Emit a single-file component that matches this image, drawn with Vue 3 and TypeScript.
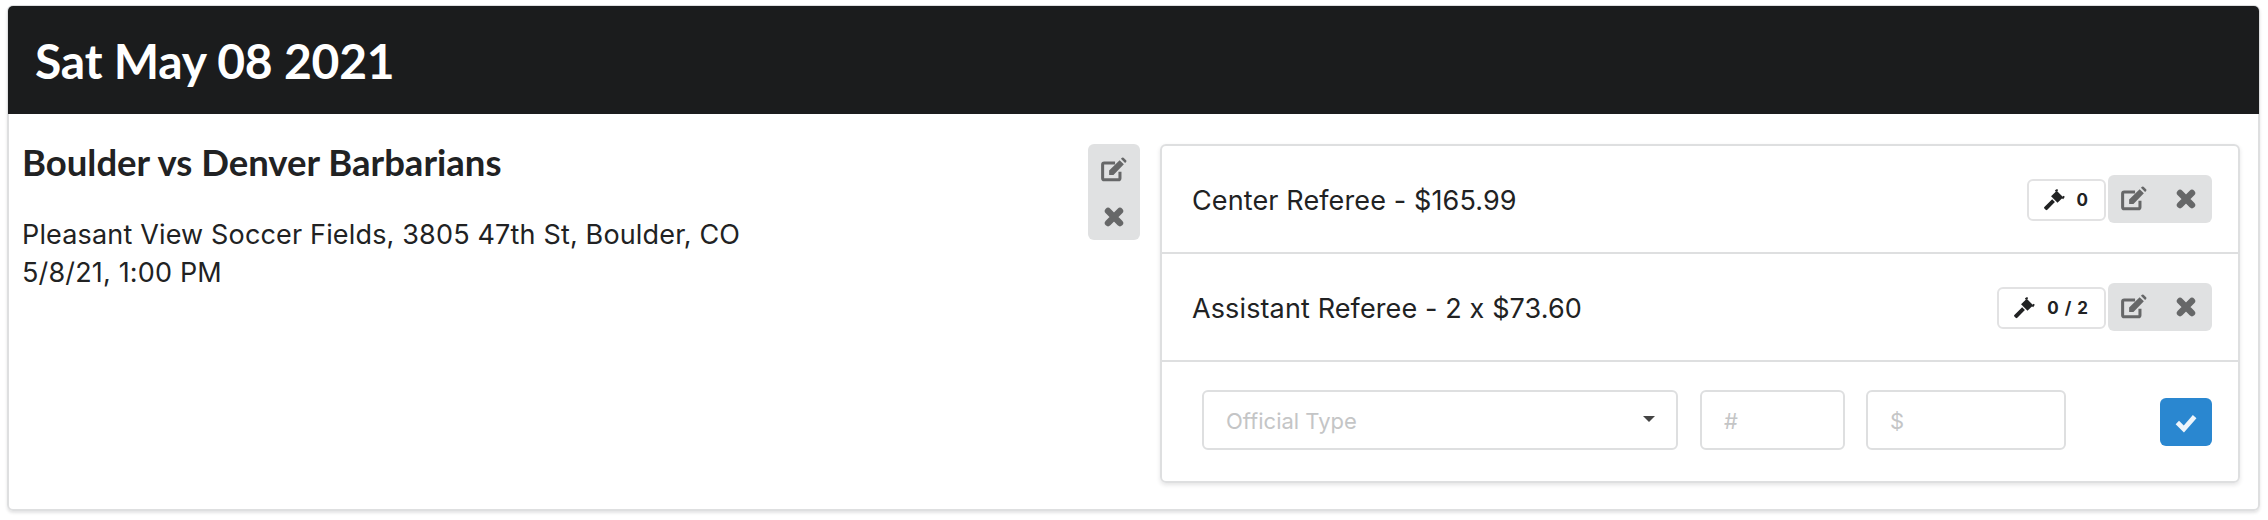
<script setup lang="ts">
type Official = {
  label: string
  count: string
}

const officials: Official[] = [
  { label: 'Center Referee - $165.99', count: '0' },
  { label: 'Assistant Referee - 2 x $73.60', count: '0 / 2' },
]
</script>

<template>
  <div class="page">
    <section class="day-card">
      <header class="day-header">Sat May 08 2021</header>
      <div class="day-body">
        <div class="game-info">
          <h3 class="game-title">Boulder vs Denver Barbarians</h3>
          <p class="game-meta">Pleasant View Soccer Fields, 3805 47th St, Boulder, CO<br />5/8/21, 1:00 PM</p>
        </div>

        <div class="btn-group vertical">
          <button class="icon-btn" type="button">
            <svg class="icon" viewBox="0 0 24 24"><path d="M17.500 13.500V19.500a1.500 1.500 0 0 1-1.500 1.500H3a1.500 1.500 0 0 1-1.500-1.500V7a1.500 1.500 0 0 1 1.500-1.500h10" fill="none" stroke="currentColor" stroke-width="2.800" /><path d="M7.500 12.400 17.200 2.900l3.900 3.900-9.600 9.700h-4zM18.400 1.700l1-1a1 1 0 0 1 1.400 0l2.400 2.400a1 1 0 0 1 0 1.400l-1 1z" fill="currentColor" /></svg>
          </button>
          <button class="icon-btn" type="button">
            <svg class="icon cross" viewBox="0 0 24 24"><path d="M6.500 6.500l11 11M17.500 6.500l-11 11" fill="none" stroke="currentColor" stroke-width="6" stroke-linecap="round" /></svg>
          </button>
        </div>

        <div class="officials">
          <div v-for="official in officials" :key="official.label" class="official-row">
            <span class="official-label">{{ official.label }}</span>
            <span class="count-badge">
              <svg class="gavel" viewBox="0 0 24 24"><path d="M1.500 19.500 10 11.200l3 3-8.300 8.500a1.300 1.300 0 0 1-1.800 0l-1.400-1.400a1.300 1.300 0 0 1 0-1.800z" fill="currentColor" /><path d="M8.800 8 15 2l7 7-6.200 6z" fill="currentColor" /><path d="M13.500 2.200 16 .8M21.200 10.500 23 8" stroke="currentColor" stroke-width="2" /></svg>
              <span>{{ official.count }}</span>
            </span>
            <div class="btn-group">
              <button class="icon-btn" type="button">
                <svg class="icon" viewBox="0 0 24 24"><path d="M17.500 13.500V19.500a1.500 1.500 0 0 1-1.500 1.500H3a1.500 1.500 0 0 1-1.500-1.500V7a1.500 1.500 0 0 1 1.500-1.500h10" fill="none" stroke="currentColor" stroke-width="2.800" /><path d="M7.500 12.400 17.200 2.900l3.900 3.900-9.600 9.700h-4zM18.400 1.700l1-1a1 1 0 0 1 1.400 0l2.400 2.400a1 1 0 0 1 0 1.400l-1 1z" fill="currentColor" /></svg>
              </button>
              <button class="icon-btn" type="button">
                <svg class="icon cross" viewBox="0 0 24 24"><path d="M6.500 6.500l11 11M17.500 6.500l-11 11" fill="none" stroke="currentColor" stroke-width="6" stroke-linecap="round" /></svg>
              </button>
            </div>
          </div>

          <form class="official-form" @submit.prevent>
            <div class="field select-field">
              <span class="placeholder">Official Type</span>
              <span class="caret"></span>
            </div>
            <input class="field count-field" type="text" placeholder="#" />
            <input class="field price-field" type="text" placeholder="$" />
            <button class="save-btn" type="submit">
              <svg class="check" viewBox="0 0 24 24"><path d="M4 12.500 10 18.500 20 7" fill="none" stroke="currentColor" stroke-width="4.400" /></svg>
            </button>
          </form>
        </div>
      </div>
    </section>
  </div>
</template>

<style>
html,
body {
  margin: 0;
  background: #fff;
}
</style>

<style scoped>
.page {
  box-sizing: border-box;
  width: 2268px;
  height: 520px;
  padding: 5px 8px 9px 7px;
  font-family: Inter, "Noto Sans", sans-serif;
  color: #212223;
}

.day-card {
  box-sizing: border-box;
  height: 100%;
  display: flex;
  flex-direction: column;
  border: 2px solid #dedfe0;
  border-top-width: 1px;
  border-radius: 6px;
  box-shadow: 0 2px 3px rgba(34, 36, 38, 0.12);
}

.day-header {
  height: 108px;
  flex: none;
  display: flex;
  align-items: center;
  margin: 0 -1px;
  padding-left: 27px;
  border-radius: 5px 5px 0 0;
  background: #1b1c1d;
  color: #fff;
  font-family: Lato, sans-serif;
  font-weight: 700;
  font-size: 48px;
  letter-spacing: -0.2px;
}

.day-body {
  flex: 1;
  display: flex;
  align-items: flex-start;
  padding: 30px 18px 0 13px;
}

.game-info {
  flex: 1;
}

.game-title {
  margin: -1px 0 0;
  font-family: Lato, sans-serif;
  font-weight: 700;
  font-size: 36.5px;
  line-height: 38px;
}

.game-meta {
  margin: 35px 0 0;
  font-size: 27px;
  letter-spacing: 0.16px;
  line-height: 38px;
}

.btn-group {
  display: flex;
  background: #e0e1e2;
  border-radius: 6px;
}

.btn-group.vertical {
  flex-direction: column;
  margin-right: 20px;
  padding-top: 2px;
}

.vertical .icon-btn {
  height: 47px;
}

.icon-btn {
  width: 52px;
  height: 48px;
  padding: 0;
  display: flex;
  align-items: center;
  justify-content: center;
  border: 0;
  background: none;
  color: #666768;
}

.icon {
  width: 26px;
  height: 26px;
}

.officials {
  width: 1080px;
  flex: none;
  box-sizing: border-box;
  border: 2px solid #dedfe0;
  border-radius: 6px;
  box-shadow: 0 2px 4px rgba(34, 36, 38, 0.12);
}

.official-row {
  height: 108px;
  box-sizing: border-box;
  display: flex;
  align-items: center;
  padding: 0 26px 0 30px;
  border-bottom: 2px solid #dedfe0;
}

.official-label {
  flex: 1;
  padding-top: 2px;
  font-size: 27px;
  letter-spacing: 0.12px;
}

.count-badge {
  height: 42px;
  box-sizing: border-box;
  display: flex;
  align-items: center;
  gap: 12px;
  margin: 2px 2px 0 0;
  padding: 0 15px 0 14px;
  border: 2px solid #e2e2e3;
  border-radius: 6px;
  font-size: 17px;
  font-weight: 700;
  letter-spacing: 1px;
}

.gavel {
  width: 22px;
  height: 22px;
}

.official-form {
  height: 119px;
  display: flex;
  align-items: center;
  padding: 0 26px 0 40px;
}

.field {
  box-sizing: border-box;
  height: 60px;
  margin-bottom: 4px;
  border: 2px solid #dedfe0;
  border-radius: 6px;
  background: #fff;
  font-family: inherit;
  font-size: 22px;
  padding: 2px 22px 0;
  outline: none;
}

.field::placeholder,
.placeholder {
  color: #c4c5c6;
}

.select-field {
  width: 476px;
  display: flex;
  align-items: center;
  justify-content: space-between;
  margin-right: 22px;
}

.caret {
  width: 0;
  height: 0;
  margin: -4px -1px 0 0;
  border-left: 6px solid transparent;
  border-right: 6px solid transparent;
  border-top: 6px solid #444;
}

.count-field {
  width: 145px;
  margin-right: 21px;
}

.price-field {
  width: 200px;
}

.save-btn {
  width: 52px;
  height: 48px;
  margin-left: auto;
  padding: 0;
  display: flex;
  align-items: center;
  justify-content: center;
  border: 0;
  border-radius: 6px;
  background: #2a87d0;
  color: #eef5fb;
}

.check {
  width: 26px;
  height: 26px;
}
</style>
